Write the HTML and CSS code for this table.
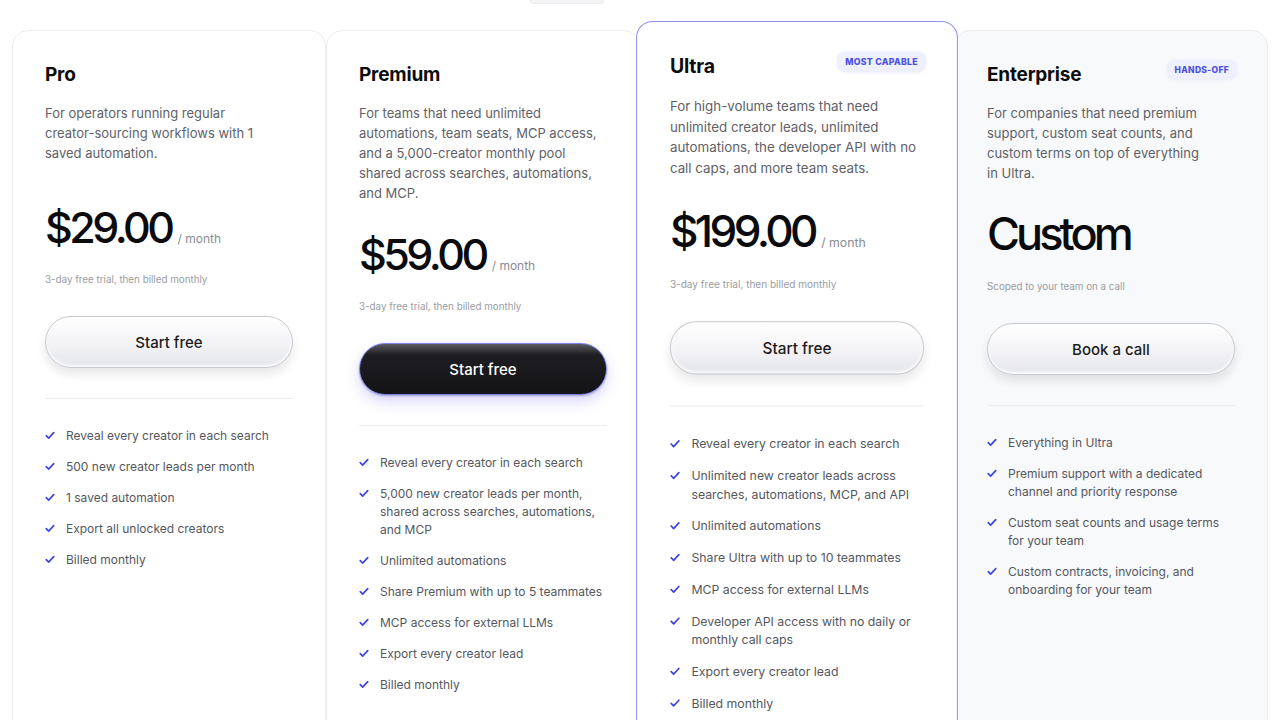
FILE: index.html
```html
<!DOCTYPE html>
<html lang="en">
<head>
<meta charset="utf-8">
<title>Pricing</title>
<link rel="stylesheet" href="styles.css">
</head>
<body>
<div class="page">
  <div class="topbar"><div class="toggle-tail"></div></div>
  <div class="plans">
    <section class="card">
      <div class="head"><h2 class="name">Pro</h2></div>
      <p class="desc">For operators running regular creator-&#8288;sourcing workflows with 1 saved automation.</p>
      <div class="price"><span class="amount">$29.00</span><span class="per">/ month</span></div>
      <p class="note">3-day free trial, then billed monthly</p>
      <button class="btn">Start free</button>
      <hr class="rule">
      <ul class="features">
        <li><svg class="chk" viewBox="0 0 12 10"><path d="M1.5 5.2 4.4 8.2 10.5 1.6"/></svg><span>Reveal every creator in each search</span></li>
        <li><svg class="chk" viewBox="0 0 12 10"><path d="M1.5 5.2 4.4 8.2 10.5 1.6"/></svg><span>500 new creator leads per month</span></li>
        <li><svg class="chk" viewBox="0 0 12 10"><path d="M1.5 5.2 4.4 8.2 10.5 1.6"/></svg><span>1 saved automation</span></li>
        <li><svg class="chk" viewBox="0 0 12 10"><path d="M1.5 5.2 4.4 8.2 10.5 1.6"/></svg><span>Export all unlocked creators</span></li>
        <li><svg class="chk" viewBox="0 0 12 10"><path d="M1.5 5.2 4.4 8.2 10.5 1.6"/></svg><span>Billed monthly</span></li>
      </ul>
    </section>
    <section class="card">
      <div class="head"><h2 class="name">Premium</h2></div>
      <p class="desc">For teams that need unlimited automations, team seats, MCP access, and a 5,000-&#8288;creator monthly pool shared across searches, automations, and MCP.</p>
      <div class="price"><span class="amount">$59.00</span><span class="per">/ month</span></div>
      <p class="note">3-day free trial, then billed monthly</p>
      <button class="btn btn-dark">Start free</button>
      <hr class="rule">
      <ul class="features">
        <li><svg class="chk" viewBox="0 0 12 10"><path d="M1.5 5.2 4.4 8.2 10.5 1.6"/></svg><span>Reveal every creator in each search</span></li>
        <li><svg class="chk" viewBox="0 0 12 10"><path d="M1.5 5.2 4.4 8.2 10.5 1.6"/></svg><span>5,000 new creator leads per month, shared across searches, automations, and MCP</span></li>
        <li><svg class="chk" viewBox="0 0 12 10"><path d="M1.5 5.2 4.4 8.2 10.5 1.6"/></svg><span>Unlimited automations</span></li>
        <li><svg class="chk" viewBox="0 0 12 10"><path d="M1.5 5.2 4.4 8.2 10.5 1.6"/></svg><span>Share Premium with up to 5 teammates</span></li>
        <li><svg class="chk" viewBox="0 0 12 10"><path d="M1.5 5.2 4.4 8.2 10.5 1.6"/></svg><span>MCP access for external LLMs</span></li>
        <li><svg class="chk" viewBox="0 0 12 10"><path d="M1.5 5.2 4.4 8.2 10.5 1.6"/></svg><span>Export every creator lead</span></li>
        <li><svg class="chk" viewBox="0 0 12 10"><path d="M1.5 5.2 4.4 8.2 10.5 1.6"/></svg><span>Billed monthly</span></li>
      </ul>
    </section>
    <section class="card card-featured">
      <div class="head"><h2 class="name">Ultra</h2><span class="badge">Most capable</span></div>
      <p class="desc">For high-&#8288;volume teams that need unlimited creator leads, unlimited automations, the developer API with no call caps, and more team seats.</p>
      <div class="price"><span class="amount">$199.00</span><span class="per">/ month</span></div>
      <p class="note">3-day free trial, then billed monthly</p>
      <button class="btn">Start free</button>
      <hr class="rule">
      <ul class="features">
        <li><svg class="chk" viewBox="0 0 12 10"><path d="M1.5 5.2 4.4 8.2 10.5 1.6"/></svg><span>Reveal every creator in each search</span></li>
        <li><svg class="chk" viewBox="0 0 12 10"><path d="M1.5 5.2 4.4 8.2 10.5 1.6"/></svg><span>Unlimited new creator leads across searches, automations, MCP, and API</span></li>
        <li><svg class="chk" viewBox="0 0 12 10"><path d="M1.5 5.2 4.4 8.2 10.5 1.6"/></svg><span>Unlimited automations</span></li>
        <li><svg class="chk" viewBox="0 0 12 10"><path d="M1.5 5.2 4.4 8.2 10.5 1.6"/></svg><span>Share Ultra with up to 10 teammates</span></li>
        <li><svg class="chk" viewBox="0 0 12 10"><path d="M1.5 5.2 4.4 8.2 10.5 1.6"/></svg><span>MCP access for external LLMs</span></li>
        <li><svg class="chk" viewBox="0 0 12 10"><path d="M1.5 5.2 4.4 8.2 10.5 1.6"/></svg><span>Developer API access with no daily or monthly call caps</span></li>
        <li><svg class="chk" viewBox="0 0 12 10"><path d="M1.5 5.2 4.4 8.2 10.5 1.6"/></svg><span>Export every creator lead</span></li>
        <li><svg class="chk" viewBox="0 0 12 10"><path d="M1.5 5.2 4.4 8.2 10.5 1.6"/></svg><span>Billed monthly</span></li>
      </ul>
    </section>
    <section class="card card-muted">
      <div class="head"><h2 class="name">Enterprise</h2><span class="badge">Hands-off</span></div>
      <p class="desc">For companies that need premium support, custom seat counts, and custom terms on top of everything in Ultra.</p>
      <div class="price"><span class="amount amount-custom">Custom</span></div>
      <p class="note">Scoped to your team on a call</p>
      <button class="btn">Book a call</button>
      <hr class="rule">
      <ul class="features">
        <li><svg class="chk" viewBox="0 0 12 10"><path d="M1.5 5.2 4.4 8.2 10.5 1.6"/></svg><span>Everything in Ultra</span></li>
        <li><svg class="chk" viewBox="0 0 12 10"><path d="M1.5 5.2 4.4 8.2 10.5 1.6"/></svg><span>Premium support with a dedicated channel and priority response</span></li>
        <li><svg class="chk" viewBox="0 0 12 10"><path d="M1.5 5.2 4.4 8.2 10.5 1.6"/></svg><span>Custom seat counts and usage terms for your team</span></li>
        <li><svg class="chk" viewBox="0 0 12 10"><path d="M1.5 5.2 4.4 8.2 10.5 1.6"/></svg><span>Custom contracts, invoicing, and onboarding for your team</span></li>
      </ul>
    </section>
  </div>
</div>
</body>
</html>
```

FILE: styles.css
```css
* { box-sizing: border-box; }
html, body { margin: 0; background: #ffffff; }
body {
  font-family: Inter, "Noto Sans", "Liberation Sans", sans-serif;
  color: #111;
  overflow: hidden;
}
.page { padding: 0 12px; }
.topbar { height: 30px; }
.toggle-tail {
  width: 74px;
  height: 4px;
  margin-left: 518px;
  background: #f4f4f6;
  border: 1px solid #ececf0;
  border-top: 0;
  border-radius: 0 0 8px 8px;
}
.plans {
  display: grid;
  grid-template-columns: repeat(4, 1fr);
  align-items: stretch;
}
.card {
  background: #fff;
  border: 1px solid #ededf0;
  border-radius: 16px;
  padding: 31px 32px 60px 32px;
  display: flex;
  flex-direction: column;
  min-height: 760px;
}
.card-featured {
  position: relative;
  z-index: 1;
  border-color: #8e92f0;
  transform-origin: top center;
  transform: translateY(-9px) scale(1.025);
}
.card-muted {
  background: #f8f9fa;
}
.head {
  display: flex;
  align-items: flex-start;
  justify-content: space-between;
  height: 27px;
}
.name {
  margin: 0;
  font-size: 19px;
  line-height: 26px;
  font-weight: 700;
  letter-spacing: -0.2px;
  color: #0d0d10;
}
.badge {
  margin-top: -2px;
  margin-right: -2px;
  font-size: 8.5px;
  font-weight: 800;
  text-transform: uppercase;
  letter-spacing: 0.3px;
  color: #4b4fe0;
  background: #eef0fe;
  border-radius: 8px;
  padding: 5px 8px;
  box-shadow: 0 0 4px #eef0fe;
}
.desc {
  margin: 14px 0 0;
  font-size: 13px;
  line-height: 20px;
  color: #5f6168;
  min-height: 73px;
}
.card-muted .desc { max-width: 222px; }
.price {
  display: flex;
  align-items: baseline;
  gap: 6px;
  margin-top: 27px;
  height: 48px;
}
.amount {
  font-size: 43px;
  font-weight: 500;
  letter-spacing: -3.5px;
  color: #0b0b0e;
  line-height: 48px;
}
.amount-custom {
  font-size: 45px;
  letter-spacing: -3.9px;
}
.per {
  font-size: 12px;
  color: #8a8c93;
}
.note {
  margin: 22px 0 0;
  font-size: 9.8px;
  color: #9a9ca3;
  line-height: 14px;
}
.btn {
  margin-top: 29px;
  height: 52px;
  width: 100%;
  border-radius: 999px;
  border: 1px solid #c9cad0;
  background: linear-gradient(180deg, #ffffff 0%, #f3f3f6 55%, #e4e5ea 100%);
  box-shadow: 0 6px 10px rgba(20, 20, 40, 0.10), inset 0 -2px 3px rgba(255,255,255,0.9), inset 0 1px 0 #fff;
  font-family: inherit;
  font-size: 15px;
  font-weight: 500;
  color: #1c1c20;
  cursor: pointer;
}
.btn-dark {
  color: #fff;
  border: 1px solid #7c7ff0;
  background: linear-gradient(180deg, #5a5a60 0%, #1e1e22 22%, #141417 100%);
  box-shadow: 0 6px 14px rgba(110, 100, 240, 0.28), 0 1px 2px rgba(0,0,0,0.3);
}
.rule {
  margin: 30px 0 0;
  border: 0;
  border-top: 1px solid #ececef;
}
.features {
  list-style: none;
  margin: 28px 0 0;
  padding: 0;
  display: flex;
  flex-direction: column;
  gap: 13px;
}
.features li {
  display: flex;
  align-items: flex-start;
  gap: 11px;
  font-size: 12px;
  line-height: 18px;
  color: #55575e;
}
.chk {
  flex: none;
  width: 10px;
  height: 9px;
  margin-top: 4px;
  fill: none;
  stroke: #3e46dc;
  stroke-width: 2;
  stroke-linecap: round;
  stroke-linejoin: round;
}
```
